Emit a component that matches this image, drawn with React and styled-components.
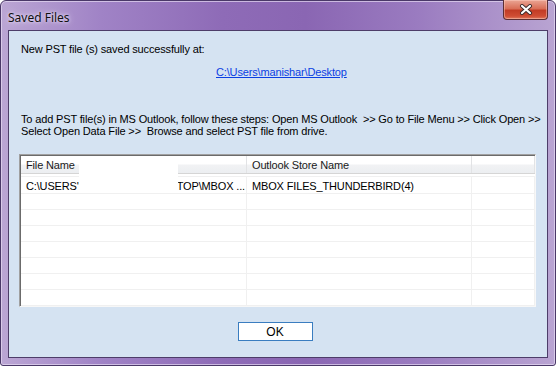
import React from 'react';
import styled, { createGlobalStyle } from 'styled-components';

const GlobalStyle = createGlobalStyle`
  html, body {
    margin: 0;
    padding: 0;
    background: #ffffff;
  }
  #root {
    width: 556px;
    height: 366px;
  }
`;

const Window = styled.div`
  box-sizing: border-box;
  width: 556px;
  height: 366px;
  display: flex;
  flex-direction: column;
  padding: 0 7px 7px 7px;
  border: 1px solid #4a3868;
  border-radius: 6px 6px 3px 3px;
  background: linear-gradient(90deg, #bba6d4 0%, #a083c6 18%, #8e6bb7 40%, #8a66b3 55%, #9a7bc0 75%, #b9a4d2 100%);
  box-shadow: inset 0 0 0 1px rgba(230, 218, 242, 0.7);
  font-family: "Liberation Sans", Arial, sans-serif;
`;

const TitleBar = styled.div`
  height: 29px;
  flex: none;
  display: flex;
  justify-content: space-between;
  align-items: flex-start;
`;

const Title = styled.div`
  padding-top: 8px;
  font-family: "Noto Sans", "Liberation Sans", sans-serif;
  font-size: 12px;
  color: #111;
  text-shadow: 0 0 6px #e8defa, 0 0 3px #ede4fa;
`;

const CloseButton = styled.div`
  box-sizing: border-box;
  width: 45px;
  height: 20px;
  margin-top: -1px;
  display: flex;
  align-items: center;
  justify-content: center;
  border: 1px solid #5b2f34;
  border-top: none;
  border-radius: 0 0 4px 4px;
  background: linear-gradient(180deg, #eaa594 0%, #d96f58 45%, #c23c25 55%, #cf4d34 85%, #e07a5e 100%);
  box-shadow: inset 0 0 0 1px rgba(255, 210, 200, 0.45);
`;

const Client = styled.div`
  flex: 1;
  display: flex;
  flex-direction: column;
  border: 1px solid #4d3d69;
  background: #d5e3f2;
  color: #000;
  font-size: 11px;
  letter-spacing: -0.15px;
`;

const Message = styled.div`
  padding: 12px 0 0 12px;
  line-height: 13px;
`;

const LinkRow = styled.div`
  padding: 10px 0 0 207px;
  line-height: 13px;
`;

const PathLink = styled.a`
  color: #0b3fe3;
  text-decoration: underline;
  cursor: pointer;
`;

const Steps = styled.div`
  padding: 34px 0 0 12px;
  line-height: 12px;
  white-space: nowrap;
`;

const Grid = styled.div`
  position: relative;
  margin: 17px 11px 0 10px;
  height: 153px;
  box-sizing: border-box;
  border-style: solid;
  border-width: 1px;
  border-color: #a0a0a0 #f7f7f7 #f7f7f7 #a0a0a0;
  box-shadow: inset 1px 1px 0 #6b6b6b;
  background: #fff;
  overflow: hidden;
`;

const HeadRow = styled.div`
  display: grid;
  grid-template-columns: 226px 225px 1fr;
  height: 17px;
  margin-top: 1px;
  margin-left: 1px;
  border-bottom: 1px solid #d5d5d5;
  background: linear-gradient(180deg, #ffffff 0%, #ffffff 45%, #f1f2f4 55%, #eceef1 100%);
`;

const HeadCell = styled.div`
  padding: 3px 0 0 5px;
  border-right: 1px solid #e2e3e5;
  color: #1a1a1a;
  white-space: nowrap;
`;

const Row = styled.div`
  display: grid;
  grid-template-columns: 226px 225px 1fr;
  height: ${(p) => (p.$first ? 16 : 15)}px;
  margin-left: 1px;
  border-top: 1px solid #f0f0f0;
  margin-top: ${(p) => (p.$first ? 2 : 0)}px;
`;

const Cell = styled.div`
  padding: ${(p) => (p.$first ? 3 : 1)}px 0 0 5px;
  border-right: 1px solid #f0f0f0;
  white-space: nowrap;
  overflow: hidden;
`;

const Mask = styled.div`
  position: absolute;
  left: 59px;
  top: 8px;
  width: 99px;
  height: 28px;
  background: #fff;
`;

const Hidden = styled.span`
  padding-left: 98px;
`;

const Footer = styled.div`
  display: flex;
  justify-content: center;
  padding: 15px 0 0 0;
`;

const OkButton = styled.button`
  box-sizing: border-box;
  width: 75px;
  height: 19px;
  margin-right: 6px;
  padding: 0;
  border: 1px solid #3a7dc0;
  background: #fff;
  font-family: "Liberation Sans", Arial, sans-serif;
  font-size: 12px;
  color: #000;
`;

const rows = [
  ['TOP\\MBOX ...', 'MBOX FILES_THUNDERBIRD(4)'],
  ['', ''], ['', ''], ['', ''], ['', ''], ['', ''], ['', ''], ['', ''], ['', ''],
];

const CloseGlyph = () => (
  <svg width="14" height="11" viewBox="0 0 14 11">
    <path d="M3 2 L11 9 M11 2 L3 9" stroke="#3a2a2a" strokeWidth="4" strokeLinecap="round" />
    <path d="M3 2 L11 9 M11 2 L3 9" stroke="#ffffff" strokeWidth="2.2" strokeLinecap="round" />
  </svg>
);

const App = () => {
  return (
    <>
      <GlobalStyle />
      <Window>
        <TitleBar>
          <Title>Saved Files</Title>
          <CloseButton>
            <CloseGlyph />
          </CloseButton>
        </TitleBar>
        <Client>
          <Message>New PST file (s) saved successfully at:</Message>
          <LinkRow>
            <PathLink>C:\Users\manishar\Desktop</PathLink>
          </LinkRow>
          <Steps>
            To add PST file(s) in MS Outlook, follow these steps: Open MS Outlook &nbsp;&gt;&gt; Go to File Menu &gt;&gt; Click Open &gt;&gt;
            <br />
            Select Open Data File &gt;&gt; &nbsp;Browse and select PST file from drive.
          </Steps>
          <Grid>
            <HeadRow>
              <HeadCell>File Name</HeadCell>
              <HeadCell>Outlook Store Name</HeadCell>
              <HeadCell />
            </HeadRow>
            {rows.map((r, i) => (
              <Row key={i} $first={i === 0}>
                <Cell $first={i === 0}>
                  {i === 0 ? (
                    <>
                      C:\USERS'
                      <Hidden>{r[0]}</Hidden>
                    </>
                  ) : null}
                </Cell>
                <Cell $first={i === 0}>{r[1] ? ' ' + r[1] : ''}</Cell>
                <Cell $first={i === 0} />
              </Row>
            ))}
            <Mask />
          </Grid>
          <Footer>
            <OkButton>OK</OkButton>
          </Footer>
        </Client>
      </Window>
    </>
  );
};

export default App;
